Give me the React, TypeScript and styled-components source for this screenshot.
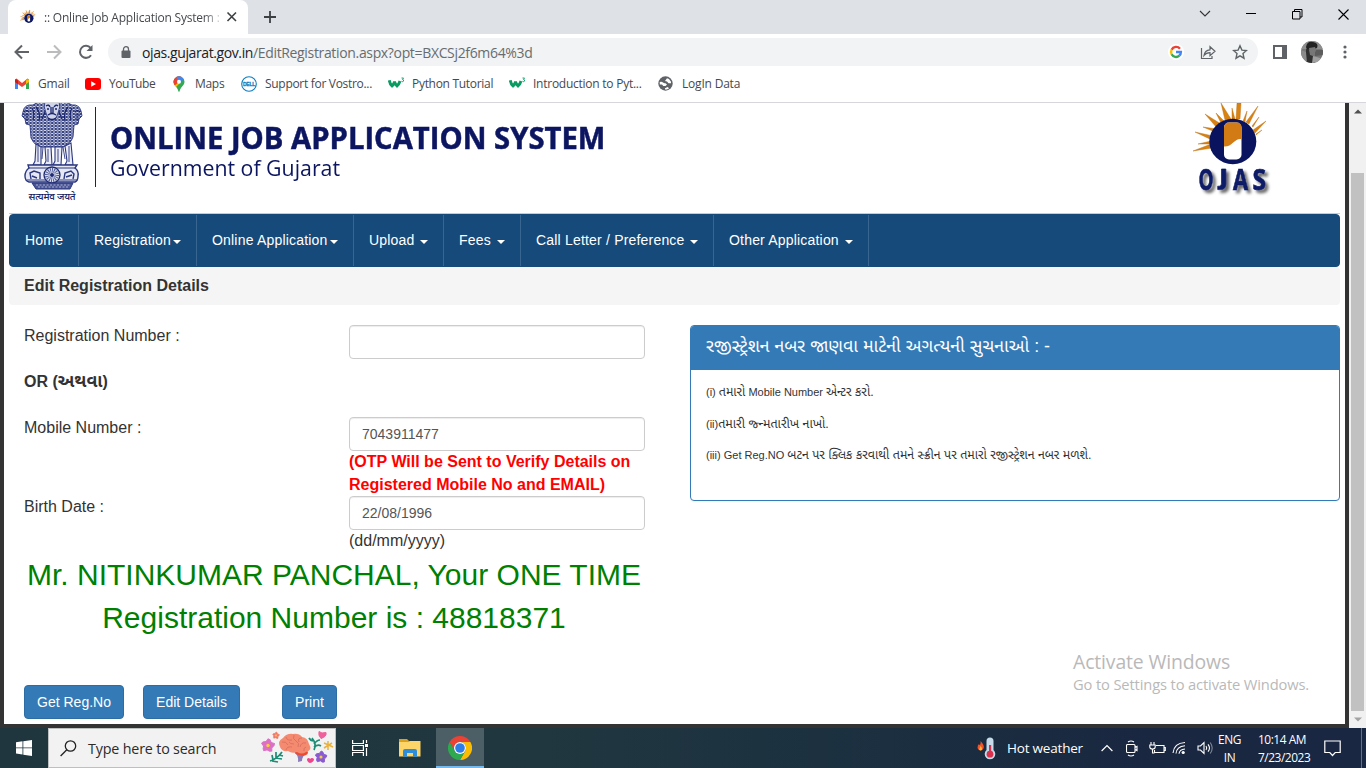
import React from "react";
import styled, { createGlobalStyle } from "styled-components";

const ui = `"Open Sans", "Noto Sans", sans-serif`;
const web = `"Liberation Sans", "Noto Sans Gujarati", "Noto Sans", sans-serif`;

const GlobalStyle = createGlobalStyle`
  * { box-sizing: border-box; }
  html, body { margin: 0; padding: 0; overflow: hidden; background: #fff; }
  svg { display: block; flex: none; }
`;

const Screen = styled.div`
  width: 1366px;
  height: 768px;
  display: flex;
  flex-direction: column;
  overflow: hidden;
  position: relative;
  font-family: ${ui};
`;

/* ---------- browser ---------- */
const TabStrip = styled.div`
  height: 34px;
  flex: none;
  background: #dee1e6;
  display: flex;
  padding-left: 8px;
`;
const Tab = styled.div`
  width: 240px;
  height: 34px;
  background: #fff;
  border-radius: 8px 8px 0 0;
  display: flex;
  align-items: center;
  padding-left: 12px;
`;
const TabTitle = styled.div`
  width: 182px;
  flex: none;
  margin-left: 8px;
  font-size: 12px;
  letter-spacing: -0.21px;
  color: #45494d;
  white-space: nowrap;
  -webkit-mask-image: linear-gradient(90deg, #000 160px, transparent 180px);
`;
const NewTab = styled.div`
  width: 44px;
  display: grid;
  place-items: center;
`;
const WindowControls = styled.div`
  margin-left: auto;
  display: flex;
  height: 28px;
  align-items: center;
  gap: 0;
`;
const ControlCell = styled.div`
  width: 46px;
  display: grid;
  place-items: center;
`;
const Toolbar = styled.div`
  height: 36px;
  flex: none;
  display: flex;
  align-items: center;
  padding-left: 14px;
`;
const NavIcons = styled.div`
  display: flex;
  gap: 16px;
  width: 94px;
`;
const Omnibox = styled.div`
  width: 1150px;
  height: 28px;
  border-radius: 14px;
  background: #f1f3f4;
  display: flex;
  align-items: center;
  padding-left: 13px;
  padding-right: 10px;
`;
const Url = styled.div`
  margin-left: 11px;
  font-size: 14px;
  letter-spacing: -0.34px;
  color: #686c70;
  white-space: nowrap;
  b { font-weight: 400; color: #202124; letter-spacing: -0.4px; }
`;
const OmniActions = styled.div`
  margin-left: auto;
  display: flex;
  align-items: center;
  gap: 16px;
`;
const ToolbarEnd = styled.div`
  display: flex;
  align-items: center;
  padding-left: 15px;
`;
const Dots = styled.svg`
  margin-left: 6px;
`;
const Bookmarks = styled.div`
  height: 33px;
  flex: none;
  display: flex;
  align-items: center;
  padding: 0 0 5px 14px;
  border-bottom: 1px solid #d5d7da;
`;
const Bookmark = styled.div<{ $w: number; $gap?: number; $ls?: number }>`
  width: ${(p) => p.$w}px;
  flex: none;
  display: flex;
  align-items: center;
  gap: ${(p) => p.$gap ?? 8}px;
  font-size: 12px;
  letter-spacing: ${(p) => p.$ls ?? -0.3}px;
  color: #45494d;
  white-space: nowrap;
`;

/* ---------- page ---------- */
const Viewport = styled.div`
  height: 625px;
  flex: none;
  display: flex;
`;
const Page = styled.div`
  width: 1349px;
  border: 4px solid #333;
  border-top: 0;
  background: #fff;
  padding: 0 5px;
  font-family: ${web};
  font-size: 16px;
  line-height: 22.86px;
  color: #333;
  overflow: hidden;
`;
const Header = styled.div`
  height: 111px;
  display: flex;
  position: relative;
  border-bottom: 1px solid #cbcbcb;
`;
const EmblemBox = styled.div`
  width: 86px;
  padding-left: 9px;
`;
const Motto = styled.div`
  width: 68px;
  margin-top: 2px;
  text-align: center;
  font: 500 9.8px/12px "Noto Sans Devanagari", "Noto Sans", sans-serif;
  color: #152060;
  letter-spacing: -0.2px;
  white-space: nowrap;
`;
const HeaderRule = styled.div`
  width: 1px;
  height: 80px;
  margin-top: 4px;
  background: #1b2452;
`;
const Titles = styled.div`
  padding: 18px 0 0 14px;
  flex: 1;
  font-family: ${ui};
  color: #0b1560;
  white-space: nowrap;
`;
const Title = styled.div`
  font-size: 30.5px;
  line-height: 33px;
  font-weight: 700;
  -webkit-text-stroke: 0.5px #0b1560;
  transform: scaleX(0.958);
  transform-origin: 0 0;
`;
const Subtitle = styled.div`
  font-size: 22.5px;
  line-height: 27px;
  transform: scaleX(0.947);
  transform-origin: 0 0;
`;
const LogoBox = styled.div`
  width: 147px;
`;
const Menu = styled.div`
  height: 53px;
  background: #164a7b;
  border: 1px solid #164a7b;
  border-radius: 4px;
  display: flex;
`;
const MenuItem = styled.div<{ $w: number }>`
  width: ${(p) => p.$w}px;
  border-right: 1px solid #386690;
  padding-left: 15px;
  display: flex;
  align-items: center;
  font-size: 14px;
  letter-spacing: 0.19px;
  color: #fff;
  white-space: nowrap;
`;
const Caret = styled.span<{ $gap?: number }>`
  margin-left: ${(p) => p.$gap ?? 6}px;
  margin-top: 2px;
  border: 4px solid transparent;
  border-top-color: #fff;
  border-bottom: 0;
`;
const SectionTitle = styled.div`
  height: 38px;
  background: #f5f5f5;
  border-radius: 4px;
  padding-left: 15px;
  font-weight: 700;
  line-height: 37px;
`;
const Columns = styled.div`
  display: flex;
  padding-top: 20px;
`;
const FormColumn = styled.div`
  width: 681px;
  padding-left: 15px;
`;
const Row = styled.div<{ $h: number }>`
  height: ${(p) => p.$h}px;
  display: flex;
`;
const Label = styled.div<{ $bold?: boolean }>`
  width: 325px;
  font-weight: ${(p) => (p.$bold ? 700 : 400)};
`;
const Gujarati = styled.span<{ $size: number }>`
  font-size: ${(p) => p.$size}px;
  line-height: 1;
`;
const Field = styled.div`
  width: 296px;
`;
const Input = styled.div`
  height: 34px;
  border: 1px solid #ccc;
  border-radius: 4px;
  box-shadow: inset 0 1px 1px rgba(0, 0, 0, 0.075);
  padding: 0 12px;
  font-size: 14px;
  line-height: 32px;
  color: #555;
`;
const Warning = styled.div`
  font-weight: 700;
  color: #f00;
  white-space: nowrap;
`;
const Result = styled.div`
  width: 620px;
  height: 132px;
  padding-top: 1px;
  font-size: 30px;
  line-height: 42.86px;
  color: #008000;
  text-align: center;
  white-space: nowrap;
`;
const Buttons = styled.div`
  display: flex;
`;
const Button = styled.div<{ $w: number; $ml?: number }>`
  width: ${(p) => p.$w}px;
  margin-left: ${(p) => p.$ml ?? 0}px;
  height: 34px;
  border: 1px solid #2e6da4;
  border-radius: 4px;
  background: #337ab7;
  color: #fff;
  font-size: 14px;
  line-height: 32px;
  text-align: center;
`;
const Panel = styled.div`
  width: 650px;
  height: 176px;
  border: 1px solid #337ab7;
  border-radius: 4px;
  box-shadow: 0 1px 1px rgba(0, 0, 0, 0.05);
  overflow: hidden;
`;
const PanelHead = styled.div`
  height: 44px;
  background: #337ab7;
  color: #fff;
  padding-left: 15px;
  font-size: 17.85px;
  line-height: 41px;
  white-space: nowrap;
`;
const PanelBody = styled.div`
  padding: 14px 15px;
  font-size: 11px;
  line-height: 16px;
  display: flex;
  flex-direction: column;
  gap: 15.6px;
  white-space: nowrap;
`;
const Step = styled.div`
  height: 16px;
`;
const Scrollbar = styled.div`
  width: 17px;
  background: #f1f1f1;
  display: flex;
  flex-direction: column;
  align-items: center;
`;
const ScrollArrow = styled.div<{ $down?: boolean }>`
  height: 17px;
  display: grid;
  place-items: center;
  svg { transform: ${(p) => (p.$down ? "rotate(180deg)" : "none")}; }
`;
const Thumb = styled.div`
  width: 13px;
  height: 539px;
  margin-top: 53px;
  background: #c1c1c1;
`;

const Watermark = styled.div`
  position: absolute;
  left: 1073px;
  top: 650px;
  color: #b9b9b9;
  white-space: nowrap;
`;
const MarkTitle = styled.div`
  font-size: 19.4px;
  line-height: 24px;
  letter-spacing: -0.13px;
`;
const MarkText = styled.div`
  font-size: 14.7px;
  line-height: 21px;
  letter-spacing: -0.13px;
`;

/* ---------- taskbar ---------- */
const Taskbar = styled.div`
  height: 40px;
  flex: none;
  display: flex;
  background: linear-gradient(90deg, #20363f 0%, #20373f 40%, #1b2f40 65%, #192740 85%, #1a2743 100%);
  color: #fff;
`;
const TaskCell = styled.div<{ $w: number; $active?: boolean }>`
  width: ${(p) => p.$w}px;
  display: grid;
  place-items: center;
  background: ${(p) => (p.$active ? "#4c5e66" : "transparent")};
  box-shadow: inset 0 -2px ${(p) => (p.$active ? "#76b9ed" : "transparent")};
`;
const Search = styled.div`
  width: 288px;
  background: #f2f2f2;
  border: 1px solid #bdc0c1;
  display: flex;
  align-items: center;
  padding-left: 11px;
  font-size: 14.3px;
  letter-spacing: -0.17px;
  color: #2b2b2b;
  span { width: 172px; margin-left: 11px; white-space: nowrap; }
`;
const Tray = styled.div`
  margin-left: auto;
  display: flex;
  align-items: center;
`;
const Weather = styled.div`
  width: 121px;
  display: flex;
  align-items: center;
  gap: 10px;
  font-size: 13.5px;
  letter-spacing: -0.2px;
  white-space: nowrap;
`;
const TrayIcon = styled.div<{ $w: number }>`
  width: ${(p) => p.$w}px;
  display: grid;
  place-items: center;
`;
const TrayText = styled.div<{ $w: number }>`
  width: ${(p) => p.$w}px;
  text-align: center;
  font-size: 11.9px;
  line-height: 18px;
  letter-spacing: -0.45px;
  white-space: nowrap;
`;
const ShowDesktop = styled.div`
  width: 5px;
  height: 40px;
  border-left: 1px solid #66717f;
`;

/* ---------- drawings ---------- */
const SUN_RAYS =
  "M0 48l19-3-1-4zM5 41l14 0-1-3zM2 29l17 8 1-4zM10 24l12 5 2-3zM12 11l12 14 4-4zM23 10l5 10 3-2zM28 0l4 17 6-1zM39 5l0 11 3 0zM44 0h4l-1 16h-4zM54 8l-4 10 2 1zM65 3l-12 16 3 2zM66 14l-7 9 1 1zM73 18l-13 9 2 3zM69 27l-6 4 0 1z";

const OjasMark = ({ size }: { size: number }) => (
  <svg width={size} height={size} viewBox="0 0 76 64">
    <path d={SUN_RAYS} fill="#d47a12" stroke="#d47a12" strokeWidth="1" />
    <circle cx="42" cy="38" r="22" fill="#0c1663" />
    <rect x="36" y="24" width="12" height="29" rx="6" fill="#fff" />
    <path d="M36 41V30q0-6 5-6h2q5 0 5 6v5c-5 0-6 6-12 6z" fill="#d47a12" />
  </svg>
);

const OjasLogo = () => (
  <svg width="86" height="100" viewBox="0 0 86 100">
    <defs>
      <filter id="logoShadow" x="-20%" y="-20%" width="150%" height="150%">
        <feDropShadow dx="3" dy="3" stdDeviation="1.8" floodColor="#000" floodOpacity="0.6" />
      </filter>
    </defs>
    <path d={SUN_RAYS} fill="#d9820f" stroke="#b8690f" strokeWidth=".4" />
    <ellipse cx="39.800" cy="38.500" rx="23.500" ry="22.800" fill="#0a145e" />
    <rect x="31" y="19.500" width="17.500" height="37" rx="5" fill="#fff" />
    <path d="M31 43.500V25q0-5.500 5-5.500h7.500q5 0 5 5.500v11c-7.500-1-9 8-17.500 7.500z" fill="#d27a14" />
    <g filter="url(#logoShadow)" fill="#0a1a66" stroke="#0a1a66" strokeWidth=".7" fontFamily="Open Sans" fontWeight="700" fontSize="29">
      <text x="5.500" y="86.500" textLength="15" lengthAdjust="spacingAndGlyphs">O</text>
      <path d="M28.500 66h4.300v15q0 5.600-5.600 5.600h-2.500v-3.400h1.500q2.300 0 2.300-3z" />
      <text x="40" y="86.500" textLength="15" lengthAdjust="spacingAndGlyphs">A</text>
      <text x="59.500" y="86.500" textLength="13.500" lengthAdjust="spacingAndGlyphs">S</text>
    </g>
  </svg>
);

const Emblem = () => (
  <svg width="68" height="87" viewBox="0 0 68 87" fill="none" stroke="#2b3780">
    <defs>
      <pattern id="mane" width="3.600" height="3" patternUnits="userSpaceOnUse">
        <path d="M0 .6q1.800 2.600 3.600 0M-1.800 2.100q1.800 2.600 3.600 0M1.800 2.100q1.800 2.600 3.600 0" stroke="#1f2b74" strokeWidth=".9" fill="none" />
      </pattern>
    </defs>
    <path d="M15 2Q6 1 5 9l-1 4 3 3 1 5 4 1 1 13q4 8 10 9h22q7-2 10-10l1-12 4-1 1-5 3-3-1-5q-2-7-9-6Q48-2 34-2T15 2z" fill="#d6daeb" strokeWidth="0" />
    <path d="M15 2Q6 1 5 9l-1 4 3 3 1 5 4 1 1 13q4 8 10 9h22q7-2 10-10l1-12 4-1 1-5 3-3-1-5q-2-7-9-6Q48-2 34-2T15 2z" fill="url(#mane)" strokeWidth=".9" />
    <path d="M27-2q-2 6 1 12 1 6 6 8 5-2 6-8 3-6 1-12z" fill="#cfd4e8" strokeWidth=".9" />
    <path d="M28 3q3-2 4 1M36 4q2-3 4-1M33 4v6M35 4v6M30 12q4-3 8 0M30 15q4 3 8 0M27 9l-3 7M41 9l3 7M29 6h2M37 6h2" stroke="#18246c" strokeWidth="1.300" />
    <path d="M6 12h5M6 9q3-3 5 0M7 16h4M62 12h-5M62 9q-3-3-5 0M61 16h-4M18 4q5 6 3 14M50 4q-5 6-3 14M14 5q3 5 1 12M54 5q-3 5-1 12" stroke="#18246c" strokeWidth="1.200" />
    <path d="M18 41l-1 17-2 4h8V44zM27 44l1 14-2 4h8l-1-18zM37 44v14l-2 4h8l1-18zM47 43l2 15-2 4h8l-2-22z" fill="#e8eaf5" strokeWidth="1.100" />
    <path d="M20 43v16M30 46v13M40 46v13M51 43v16M25 44l-1 12M45 44l2 12" strokeWidth=".9" />
    <path d="M10 62h49l-2 3q4 3 3 8 0 5-3 6H11q-4-1-4-6t4-8z" fill="#e6e8f4" strokeWidth="1.400" />
    <path d="M10 65h48M9 77h50" strokeWidth="1" />
    <circle cx="34" cy="72" r="8" fill="#d9ddee" strokeWidth="1.300" stroke="#1a266e" />
    <circle cx="34" cy="72" r="4.700" stroke="#4d5896" strokeWidth="5" strokeDasharray=".8 1" />
    <circle cx="34" cy="72" r="1.500" fill="#1a266e" />
    <path d="M13 76l-1-6 4-2 6 2v6M14 73l5 2M46 76l1-6 6-2 3 3-1 5M48 74l6-2" strokeWidth="1.400" />
    <path d="M14 80h41l-3 6H18z" fill="#4a5593" strokeWidth="1" />
    <path d="M18 82h34M20 84h30" stroke="#c5cae2" strokeWidth=".8" strokeDasharray="2 1.500" />
  </svg>
);

const Stroke = ({ d, w, h, c = "#5f6368", sw = 2 }: { d: string; w: number; h: number; c?: string; sw?: number }) => (
  <svg width={w} height={h} viewBox={`0 0 ${w} ${h}`} fill="none" stroke={c} strokeWidth={sw}>
    <path d={d} />
  </svg>
);

const ReloadIcon = () => (
  <svg width="16" height="16" viewBox="0 0 16 16">
    <path d="M13 11.200A6 6 0 1 1 12.600 4" fill="none" stroke="#5f6368" strokeWidth="2" />
    <path d="M14.500 1v6h-6z" fill="#5f6368" />
  </svg>
);
const LockIcon = () => (
  <svg width="10" height="13" viewBox="0 0 10 13">
    <rect x="0.500" y="4.500" width="9" height="7.500" rx="1" fill="#5f6368" />
    <path d="M2.500 5V3.200a2.500 2.500 0 0 1 5 0V5" fill="none" stroke="#5f6368" strokeWidth="1.300" />
  </svg>
);
const GoogleIcon = () => (
  <svg width="16" height="16" viewBox="0 0 16 16" fill="none" strokeWidth="2.400">
    <circle cx="8" cy="8" r="8" fill="#fff" />
    <path d="M12 4.700A5 5 0 0 0 3.600 5.700" stroke="#ea4335" />
    <path d="M3.600 5.700a5 5 0 0 0 0 4.600" stroke="#fbbc05" />
    <path d="M3.600 10.300A5 5 0 0 0 11.300 11.700" stroke="#34a853" />
    <path d="M11.300 11.700A5 5 0 0 0 12.900 8H8" stroke="#4285f4" />
  </svg>
);
const ShareIcon = () => (
  <svg width="16" height="16" viewBox="0 0 16 16" fill="none" stroke="#5f6368" strokeWidth="1.200">
    <path d="M1.500 4v10.500h10.500V12" />
    <path d="M4 11.500c.5-4 3-5.500 6-5.700V2.700L15 7.200l-5 4.400V8.700c-2.500 0-4.500.8-6 2.800z" />
  </svg>
);
const StarIcon = () => (
  <svg width="16" height="16" viewBox="0 0 16 16" fill="none" stroke="#5f6368" strokeWidth="1.400">
    <path d="M8 1.800l1.900 4.300 4.600.4-3.500 3.100 1 4.600L8 11.800l-4 2.400 1-4.600L1.500 6.500l4.600-.4z" />
  </svg>
);
const SidePanelIcon = () => (
  <svg width="14" height="14" viewBox="0 0 14 14">
    <path d="M0 0h14v14H0z" fill="#5f6368" />
    <path d="M2 2h7v10H2z" fill="#fff" />
  </svg>
);
const Avatar = () => (
  <svg width="22" height="22" viewBox="0 0 22 22">
    <defs><clipPath id="face"><circle cx="11" cy="11" r="11" /></clipPath></defs>
    <g clipPath="url(#face)">
      <path d="M0 0h22v22H0z" fill="#777" />
      <path d="M0 0h22v8H0z" fill="#8e8e8e" />
      <path d="M14 9h8v5l-8 1z" fill="#5c5c5c" />
      <path d="M5 6q1-6 7-5 6 1 4 6l-3 1-7 1z" fill="#222" />
      <path d="M8 7l6-1 1 4-3 3-3-1z" fill="#777" />
      <path d="M5 8l3 1 1 5 3 1 2 7H5z" fill="#303030" />
      <path d="M0 9l5 2 1 11H0z" fill="#8b8b8b" />
      <path d="M12 15l7 2 1 5h-9z" fill="#a0a0a0" />
    </g>
  </svg>
);
const GmailIcon = () => (
  <svg width="16" height="14" viewBox="0 0 16 14">
    <path d="M1 3v9h3V5z" fill="#4285f4" />
    <path d="M15 3v9h-3V5z" fill="#34a853" />
    <path d="M1 2.500L2.500 1.500 8 6l5.500-4.500L15 2.500V5L8 10 1 5z" fill="#ea4335" />
    <path d="M12 3.500l2-1.500 1 1v2l-3 2.200z" fill="#fbbc04" />
    <path d="M1 5V3l1-1 2 1.500v3.700z" fill="#c5221f" />
  </svg>
);
const YouTubeIcon = () => (
  <svg width="16" height="12" viewBox="0 0 16 12">
    <rect width="16" height="12" rx="3" fill="#f00" />
    <path d="M6.200 3.300v5.400L11 6z" fill="#fff" />
  </svg>
);
const MapsIcon = () => (
  <svg width="12" height="16" viewBox="0 0 12 16">
    <defs>
      <clipPath id="pin"><path d="M6 .3a5.500 5.500 0 0 1 5.500 5.400c0 3.800-4 5-4.900 9.500q-.6 1-1.200 0C4.500 10.700.5 9.500.5 5.700A5.500 5.500 0 0 1 6 .3z" /></clipPath>
    </defs>
    <g clipPath="url(#pin)">
      <path d="M0 0h12v16H0z" fill="#34a853" />
      <path d="M-1 9L11-3 6 8l-5 5z" fill="#fbbc04" />
      <path d="M0 0h9L1 9z" fill="#ea4335" />
      <path d="M3-1h9v4L5 7z" fill="#4285f4" />
      <path d="M-1 3l3-1 4 4-5 4z" fill="#ea4335" />
    </g>
    <circle cx="6" cy="5.700" r="2" fill="#fff" />
  </svg>
);
const DellIcon = () => (
  <svg width="16" height="16" viewBox="0 0 16 16">
    <circle cx="8" cy="8" r="7.300" fill="#fff" stroke="#0b7dc1" strokeWidth="1.100" />
    <text x="2" y="10" fontFamily="Liberation Sans" fontWeight="700" fontSize="5.500" fill="#0b7dc1" stroke="#0b7dc1" strokeWidth=".3" textLength="12" lengthAdjust="spacingAndGlyphs">DELL</text>
  </svg>
);
const W3Icon = () => (
  <svg width="17" height="13" viewBox="0 0 17 13" fill="none" stroke="#0a9b63">
    <path d="M1.300 3.300q.7 4 2.700 5.700 2-1.500 2.500-4.500.7 3 2.500 4.500 2-1.700 3-5" strokeWidth="2.900" />
    <path d="M13.500 1h2l-1 1.500q1.500 0 1 1.500t-2 .3" strokeWidth=".9" />
  </svg>
);
const GlobeIcon = () => (
  <svg width="15" height="15" viewBox="0 0 15 15">
    <circle cx="7.500" cy="7.500" r="7.200" fill="#5f6368" />
    <path d="M1.700 6q2.300-.5 3.300.5t2.500.7L9 8.500 7.500 10H5.300L4 8.500H1.800zM7 5l2-2.800 2 .7 2 2.800v1.500h-2.500L9 5.600zM7 13.500v-1.300L9.500 11l1.700 1.200L9 13.500z" fill="#fff" />
  </svg>
);

const WindowsIcon = () => (
  <svg width="16" height="16" viewBox="0 0 16 16" fill="#fff">
    <path d="M0 2.200l6.500-.9v6.200H0zM7.300 1.200L16 0v7.500H7.300zM0 8.300h6.500v6.200L0 13.600zM7.300 8.300H16V16l-8.700-1.300z" />
  </svg>
);
const SearchIcon = () => (
  <svg width="17" height="17" viewBox="0 0 17 17" fill="none" stroke="#222" strokeWidth="1.300">
    <circle cx="10.500" cy="6" r="5.200" />
    <path d="M6.800 9.700L.6 16" />
  </svg>
);
const Flower = ({ x, y, s, c }: { x: number; y: number; s: number; c: string }) => (
  <g transform={`translate(${x} ${y}) scale(${s})`}>
    {[0, 72, 144, 216, 288].map((a) => (
      <path key={a} d="M0 0L-2.600-4 -1-7 1-6.300 2.600-4z" fill={c} stroke={c} transform={`rotate(${a + 10})`} />
    ))}
    <circle r="1.800" fill="#f4cf3a" />
  </g>
);
const BrainArt = () => (
  <svg width="74" height="34" viewBox="0 0 74 34">
    <Flower x={8} y={14.5} s={0.95} c="#dc6fc4" />
    <Flower x={16} y={4.5} s={0.5} c="#f2776b" />
    <Flower x={61} y={26} s={0.85} c="#8a5bd0" />
    <path d="M10 30q7-2 12-9M13 29l-1-5M16 27v-6M12 30l6 1M16 27l6 1M19 24l4 1" fill="none" stroke="#1c8c74" strokeWidth="1.700" />
    <path d="M52 7q5 6 2 12M54 13q3-4 6-4M54 16q4-3 7-1M53 10q-3-1-4-3" fill="none" stroke="#1c8c74" strokeWidth="1.700" />
    <path d="M59 .5l3 1.500L66 1.500q1 4-5 6-3-3-2-7z" fill="#f0609a" stroke="#f0609a" />
    <path d="M47 28q2-2 3 0 2-2 4 0 0 3-4 4-3-1-3-4z" fill="#f0448b" />
    <path d="M68 10v9M64 17l8-5M64 12l9 4" stroke="#e9b23b" strokeWidth="1.500" />
    <path d="M33 20q6 4 5 11l4-1q0-5 5-8z" fill="#8d7bb8" />
    <path d="M40 19q8-1 8 3-2 4-9 2-5-1-4-3z" fill="#ee4a2f" />
    <path d="M20 16q-3-6 3-9 4-5 10-4 6-1 9 3 6 1 7 7 4 6-3 8-4 3-9 0-5 2-9-1-6 1-8-4z" fill="#f48a70" />
    <path d="M22 11q4-1 6 3M26 6q1 4 6 3M34 4q-2 4 2 6t2 6M42 7q-5 0-3 4M46 12q-5-1-6 4M26 19q1-4 6-3M34 13q-4 0-5-2M44 20q-1-3 2-4" fill="none" stroke="#d8705f" strokeWidth=".9" />
  </svg>
);
const TaskViewIcon = () => (
  <svg width="17" height="16" viewBox="0 0 17 16" fill="none" stroke="#fff" strokeWidth="1.200">
    <path d="M.6 0v3.500h10.800V0M.6 16v-3.500h10.800V16M.6 5.500h10.800v5H.6zM14.500 0v3M14.500 8v8" />
    <path d="M13 4h3v3h-3z" fill="#fff" stroke="none" />
  </svg>
);
const FolderIcon = () => (
  <svg width="22" height="18" viewBox="0 0 22 18">
    <path d="M0 0h8l2 2h11v4H0z" fill="#dda01c" />
    <path d="M0 3h10l1-1h10.500v15.500H0z" fill="#fcd468" />
    <path d="M4 17.800V12q0-2 2-2h10q2 0 2 2v5.800h-4V14H8v3.800z" fill="#2c8ddb" />
  </svg>
);
const ChromeIcon = () => (
  <svg width="24" height="24" viewBox="0 0 24 24">
    <path d="M1.600 6A12 12 0 0 1 22.400 6H12a6 6 0 0 0-5.200 9z" fill="#ea4335" />
    <path d="M22.400 6A12 12 0 0 1 12 24l5.200-9A6 6 0 0 0 12 6z" fill="#fbbc04" />
    <path d="M1.600 6L6.800 15a6 6 0 0 0 10.400 0L12 24A12 12 0 0 1 1.600 6z" fill="#2da94f" />
    <circle cx="12" cy="12" r="6" fill="#fff" />
    <circle cx="12" cy="12" r="4.800" fill="#2f7de9" />
  </svg>
);
const ThermoIcon = () => (
  <svg width="20" height="23" viewBox="0 0 20 23">
    <path d="M3.500 4q4 4 3.200 7a3.200 3.200 0 0 1-6.200 0Q.5 8 2 7q0 1 1 1 1-2 .5-4z" fill="#f0552d" />
    <path d="M3.500 9q2 2 1.500 3.500a1.500 1.500 0 0 1-2.800 0Q2.500 11 3.500 9z" fill="#fcb93c" />
    <path d="M9.500 4a3.500 3.500 0 0 1 7 0v9a5.300 5.300 0 1 1-7 0z" fill="#c5dbea" />
    <path d="M12 8h2.200v7h-2.200z" fill="#d9304c" />
    <circle cx="13" cy="17.200" r="3.400" fill="#d9304c" />
  </svg>
);
const MeetIcon = () => (
  <svg width="12" height="17" viewBox="0 0 12 17" fill="none" stroke="#fff" strokeWidth="1.100">
    <path d="M1.500 4.500H8q1 0 1 1v6q0 1-1 1H1.500q-1 0-1-1v-6q0-1 1-1zM9 7.500l2-1v4l-2-1M2 2Q5 0 8 2M2 15q3 2 6 0" />
  </svg>
);
const BatteryIcon = () => (
  <svg width="17" height="13" viewBox="0 0 17 13" fill="none" stroke="#fff" strokeWidth="1.100">
    <path d="M7 3.500h8v7H5.500V8M15 5.500h1.300v3H15M2 0v3M5 0v3M.8 3h5.400v2q0 2-2.700 2T.8 5zM3.500 7v4h2" />
  </svg>
);
const WifiIcon = () => (
  <svg width="14" height="14" viewBox="0 0 14 14" fill="none" stroke="#fff" strokeWidth="1.100">
    <path d="M1 12Q2 2 13 1.500M4 12.500Q4.500 5.500 13 4.700M7 12.800Q7.500 8.500 13 8" />
    <circle cx="11.200" cy="11.500" r="1.600" fill="#fff" stroke="none" />
  </svg>
);
const VolumeIcon = () => (
  <svg width="17" height="14" viewBox="0 0 17 14" fill="none" stroke="#fff" strokeWidth="1.100">
    <path d="M1 5h2.500L7 1.500v11L3.500 9H1zM9 5q1.500 2 0 4M11 3.300q3 3.700 0 7.400" />
    <path d="M13.200 1.500q4 5.500 0 11" stroke="#7d8797" />
  </svg>
);
const NoticeIcon = () => (
  <svg width="17" height="17" viewBox="0 0 17 17" fill="none" stroke="#fff" strokeWidth="1.200">
    <path d="M.8 1h15.400v11.500h-5L8.500 15.500 5.800 12.500h-5z" />
  </svg>
);
const Arrow = ({ c }: { c: string }) => (
  <svg width="8" height="5" viewBox="0 0 8 5"><path d="M0 4.500L4 .5l4 4z" fill={c} /></svg>
);

const MENU = [
  { label: "Home", w: 69 },
  { label: "Registration", w: 118, gap: 2 },
  { label: "Online Application", w: 157, gap: 2 },
  { label: "Upload", w: 90, gap: 5 },
  { label: "Fees", w: 77, gap: 6 },
  { label: "Call Letter / Preference", w: 193, gap: 5.5 },
  { label: "Other Application", w: 155, gap: 6 },
];

export default function App() {
  return (
    <Screen>
      <GlobalStyle />
      <TabStrip>
        <Tab>
          <OjasMark size={16} />
          <TabTitle>:: Online Job Application System :</TabTitle>
          <Stroke w={12} h={12} d="M1.500 1.500l8.500 8.500M10 1.500l-8.500 8.500" c="#3c4043" sw={1.6} />
        </Tab>
        <NewTab><Stroke w={12} h={12} d="M6 0v12M0 6h12" c="#3c4043" sw={1.8} /></NewTab>
        <WindowControls>
          <ControlCell><Stroke w={12} h={8} d="M1 1l5 5 5-5" c="#333" sw={1.1} /></ControlCell>
          <ControlCell><Stroke w={10} h={2} d="M0 .5h10" c="#000" sw={1} /></ControlCell>
          <ControlCell><Stroke w={11} h={11} d="M.5 2.500h7.500v7.500H.500zM2.500 2.500V.500H10v7.500H8" c="#000" sw={1} /></ControlCell>
          <ControlCell><Stroke w={11} h={11} d="M.5.500l10 10M10.500.500l-10 10" c="#000" sw={1.1} /></ControlCell>
        </WindowControls>
      </TabStrip>
      <Toolbar>
        <NavIcons>
          <Stroke w={16} h={16} d="M15 8H2.500M8 1.500L1.500 8 8 14.500" />
          <Stroke w={16} h={16} d="M1 8h12.500M8 1.500L14.500 8 8 14.500" c="#babcbe" />
          <ReloadIcon />
        </NavIcons>
        <Omnibox>
          <LockIcon />
          <Url><b>ojas.gujarat.gov.in</b>/EditRegistration.aspx?opt=BXCSj2f6m64%3d</Url>
          <OmniActions><GoogleIcon /><ShareIcon /><StarIcon /></OmniActions>
        </Omnibox>
        <ToolbarEnd>
          <SidePanelIcon />
          <TrayIcon $w={50}><Avatar /></TrayIcon>
          <Dots width="4" height="14" viewBox="0 0 4 14" fill="#5f6368">
            <circle cx="2" cy="2" r="1.600" /><circle cx="2" cy="7" r="1.600" /><circle cx="2" cy="12" r="1.600" />
          </Dots>
        </ToolbarEnd>
      </Toolbar>
      <Bookmarks>
        <Bookmark $w={71} $ls={-0.2}><GmailIcon />Gmail</Bookmark>
        <Bookmark $w={88} $ls={-0.45}><YouTubeIcon />YouTube</Bookmark>
        <Bookmark $w={68} $gap={10}><MapsIcon />Maps</Bookmark>
        <Bookmark $w={147}><DellIcon />Support for Vostro...</Bookmark>
        <Bookmark $w={121} $gap={7}><W3Icon />Python Tutorial</Bookmark>
        <Bookmark $w={149} $gap={7} $ls={-0.25}><W3Icon />Introduction to Pyt...</Bookmark>
        <Bookmark $w={90} $gap={9} $ls={-0.2}><GlobeIcon />LogIn Data</Bookmark>
      </Bookmarks>

      <Viewport>
        <Page>
          <Header>
            <EmblemBox><Emblem /><Motto>सत्यमेव जयते</Motto></EmblemBox>
            <HeaderRule />
            <Titles>
              <Title>ONLINE JOB APPLICATION SYSTEM</Title>
              <Subtitle>Government of Gujarat</Subtitle>
            </Titles>
            <LogoBox><OjasLogo /></LogoBox>
          </Header>
          <Menu>
            {MENU.map((m) => (
              <MenuItem key={m.label} $w={m.w}>
                {m.label}
                {m.gap && <Caret $gap={m.gap} />}
              </MenuItem>
            ))}
          </Menu>
          <SectionTitle>Edit Registration Details</SectionTitle>
          <Columns>
            <FormColumn>
              <Row $h={46}><Label>Registration Number :</Label><Field><Input /></Field></Row>
              <Row $h={46}><Label $bold>OR (<Gujarati $size={17.6}>અથવા</Gujarati>)</Label></Row>
              <Row $h={79}>
                <Label>Mobile Number :</Label>
                <Field>
                  <Input>7043911477</Input>
                  <Warning>(OTP Will be Sent to Verify Details on<br />Registered Mobile No and EMAIL)</Warning>
                </Field>
              </Row>
              <Row $h={57}>
                <Label>Birth Date :</Label>
                <Field><Input>22/08/1996</Input>(dd/mm/yyyy)</Field>
              </Row>
              <Result>Mr. NITINKUMAR PANCHAL, Your ONE TIME<br />Registration Number is : 48818371</Result>
              <Buttons>
                <Button $w={100}>Get Reg.No</Button>
                <Button $w={97} $ml={19}>Edit Details</Button>
                <Button $w={55} $ml={42}>Print</Button>
              </Buttons>
            </FormColumn>
            <Panel>
              <PanelHead>રજીસ્ટ્રેશન નબર જાણવા માટેની અગત્યની સુચનાઓ : -</PanelHead>
              <PanelBody>
                <Step>(i) <Gujarati $size={12.4}>તમારો</Gujarati> Mobile Number <Gujarati $size={12.5}>એન્ટર કરો.</Gujarati></Step>
                <Step>(ii)<Gujarati $size={12.5}>તમારી જ્ન્મતારીખ નાખો.</Gujarati></Step>
                <Step>(iii) Get Reg.NO <Gujarati $size={12.45}>બટન પર ક્લિક કરવાથી તમને સ્ક્રીન પર તમારો રજીસ્ટ્રેશન નબર મળશે.</Gujarati></Step>
              </PanelBody>
            </Panel>
          </Columns>
        </Page>
        <Scrollbar>
          <ScrollArrow><Arrow c="#505050" /></ScrollArrow>
          <Thumb />
          <ScrollArrow $down><Arrow c="#a3a3a3" /></ScrollArrow>
        </Scrollbar>
      </Viewport>

      <Taskbar>
        <TaskCell $w={48}><WindowsIcon /></TaskCell>
        <Search><SearchIcon /><span>Type here to search</span><BrainArt /></Search>
        <TaskCell $w={48}><TaskViewIcon /></TaskCell>
        <TaskCell $w={52}><FolderIcon /></TaskCell>
        <TaskCell $w={48} $active><ChromeIcon /></TaskCell>
        <Tray>
          <Weather><ThermoIcon />Hot weather</Weather>
          <TrayIcon $w={17}><Stroke w={12} h={8} d="M.6 7L6 1.500 11.400 7" c="#fff" sw={1.2} /></TrayIcon>
          <TrayIcon $w={34}><MeetIcon /></TrayIcon>
          <TrayIcon $w={12}><BatteryIcon /></TrayIcon>
          <TrayIcon $w={36}><WifiIcon /></TrayIcon>
          <TrayIcon $w={4}><VolumeIcon /></TrayIcon>
          <TrayText $w={57}>ENG<br />IN</TrayText>
          <TrayText $w={45}>10:14 AM<br />7/23/2023</TrayText>
          <TrayIcon $w={58}><NoticeIcon /></TrayIcon>
          <ShowDesktop />
        </Tray>
      </Taskbar>
      <Watermark>
        <MarkTitle>Activate Windows</MarkTitle>
        <MarkText>Go to Settings to activate Windows.</MarkText>
      </Watermark>
    </Screen>
  );
}
